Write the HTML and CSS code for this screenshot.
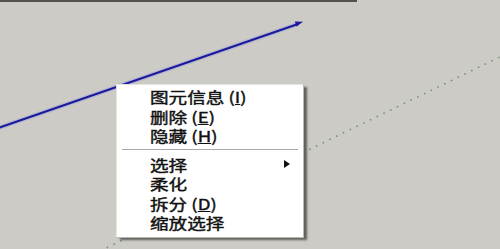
FILE: index.html
```html
<!DOCTYPE html>
<html lang="zh-CN">
<head>
<meta charset="utf-8">
<title>右键菜单</title>
<link rel="stylesheet" href="styles.css">
</head>
<body>
<div class="canvas">
  <svg class="drawing" width="500" height="249" viewBox="0 0 500 249" xmlns="http://www.w3.org/2000/svg">
    <rect x="0" y="0" width="357" height="2" fill="#51514e"/>
    <line x1="100" y1="251" x2="504" y2="55" stroke="#728b73" stroke-width="1.5" stroke-dasharray="1.5 6"/>
    <line x1="-2" y1="128" x2="298" y2="24" stroke="#9a9ae0" stroke-width="4.5" opacity="0.4"/>
    <line x1="-2" y1="128" x2="298" y2="24" stroke="#1b1a9c" stroke-width="2.2"/>
    <polygon points="303,21.8 296.6,26.6 294.8,21.6" fill="#1b1a9c"/>
  </svg>
  <div class="menu">
    <div class="item"><span class="label">图元信息 (<u>I</u>)</span></div>
    <div class="item"><span class="label">删除 (<u>E</u>)</span></div>
    <div class="item"><span class="label">隐藏 (<u>H</u>)</span></div>
    <div class="sep"></div>
    <div class="item has-sub"><span class="label">选择</span><span class="arrow"></span></div>
    <div class="item"><span class="label">柔化</span></div>
    <div class="item"><span class="label">拆分 (<u>D</u>)</span></div>
    <div class="item"><span class="label">缩放选择</span></div>
  </div>
</div>
</body>
</html>
```

FILE: styles.css
```css
html, body {
  margin: 0;
  padding: 0;
  background: #cccbc5;
}

.canvas {
  position: relative;
  width: 500px;
  height: 249px;
  overflow: hidden;
  background: #cccbc5;
}

.drawing {
  position: absolute;
  left: 0;
  top: 0;
}

.menu {
  position: absolute;
  left: 116px;
  top: 84px;
  width: 187px;
  box-sizing: border-box;
  padding: 2px 0 4px 0;
  background: #ffffff;
  border-top: 1px solid #e4e4e0;
  border-left: 1px solid #e4e4e0;
  box-shadow: 1px 1px 0 #b8b8b4, 4px 3px 2px rgba(60, 60, 58, 0.75);
  display: flex;
  flex-direction: column;
  font-family: "Noto Sans CJK SC", "Liberation Sans", sans-serif;
  font-size: 15px;
  color: #111111;
}

.item {
  height: 19.5px;
  display: flex;
  align-items: center;
  justify-content: space-between;
  padding: 0 13px 0 33px;
}

.label {
  display: inline-block;
  line-height: 19.5px;
  white-space: nowrap;
  transform: scaleX(1.24);
  transform-origin: left center;
  -webkit-text-stroke: 0.4px #111111;
}

.label u {
  text-decoration-thickness: 1px;
  text-underline-offset: 1px;
}

.arrow {
  width: 0;
  height: 0;
  border-left: 6px solid #111;
  border-top: 4px solid transparent;
  border-bottom: 4px solid transparent;
}

.sep {
  margin: 3px 5px 5px 5px;
  height: 0;
  border-top: 1px solid #a8a8a4;
}
```
